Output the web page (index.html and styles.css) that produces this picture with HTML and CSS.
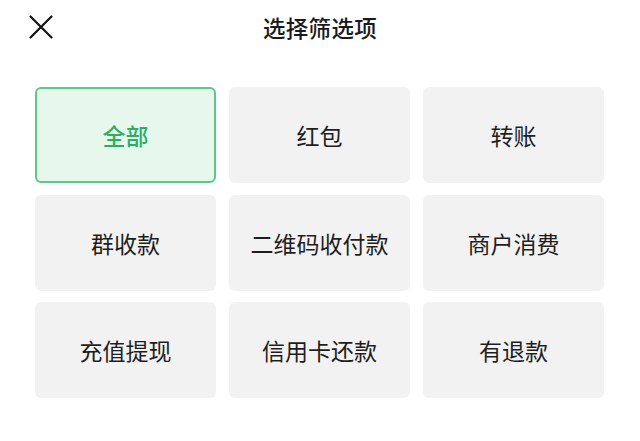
FILE: index.html
```html
<!DOCTYPE html>
<html lang="zh">
<head>
<meta charset="utf-8">
<link rel="stylesheet" href="styles.css">
</head>
<body>
<div class="page">
  <header class="header">
    <button class="close" aria-label="关闭">
      <svg width="24" height="24" viewBox="0 0 24 24"><path d="M1.5 1.5 L22.5 22.5 M22.5 1.5 L1.5 22.5" stroke="#111" stroke-width="2.2" fill="none" stroke-linecap="round"/></svg>
    </button>
    <h1 class="title">选择筛选项</h1>
  </header>
  <div class="grid">
    <div class="cell active">全部</div>
    <div class="cell">红包</div>
    <div class="cell">转账</div>
    <div class="cell">群收款</div>
    <div class="cell">二维码收付款</div>
    <div class="cell">商户消费</div>
    <div class="cell">充值提现</div>
    <div class="cell">信用卡还款</div>
    <div class="cell">有退款</div>
  </div>
</div>
</body>
</html>
```
FILE: styles.css
```css
html, body {
  margin: 0;
  padding: 0;
  background: #ffffff;
}
body {
  font-family: "Noto Sans CJK SC", "Noto Sans", sans-serif;
  color: #1a1a1a;
}
.page {
  width: 640px;
  height: 441px;
  overflow: hidden;
}
.header {
  position: relative;
  height: 54px;
  display: flex;
  align-items: center;
  justify-content: center;
}
.close {
  position: absolute;
  left: 29px;
  top: 15px;
  width: 24px;
  height: 24px;
  padding: 0;
  border: 0;
  background: none;
  display: block;
}
.close svg { display: block; }
.title {
  margin: 0;
  font-size: 22.5px;
  font-weight: 500;
  color: #1a1a1a;
  letter-spacing: 0.3px;
}
.grid {
  margin-top: 33px;
  margin-left: 35px;
  display: grid;
  grid-template-columns: repeat(3, 181px);
  grid-auto-rows: 96px;
  column-gap: 13px;
  row-gap: 11.5px;
}
.cell {
  box-sizing: border-box;
  background: #f2f2f2;
  border-radius: 6px;
  display: flex;
  align-items: center;
  justify-content: center;
  font-size: 23px;
  color: #1e1e1e;
}
.cell.active {
  background: #e6f8ec;
  border: 2px solid #5ec68b;
  color: #2aae64;
  font-weight: 500;
}
```
